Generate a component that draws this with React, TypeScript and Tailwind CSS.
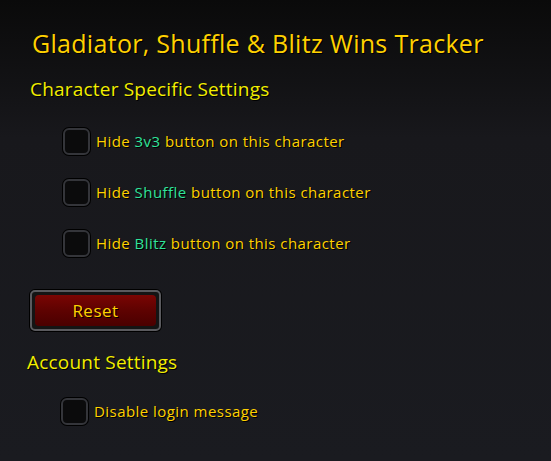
const shadow = "[text-shadow:1px_1px_0_#000]"

interface Option {
  before: string
  highlight?: string
  after: string
}

const characterOptions: Option[] = [
  { before: "Hide ", highlight: "3v3", after: " button on this character" },
  { before: "Hide ", highlight: "Shuffle", after: " button on this character" },
  { before: "Hide ", highlight: "Blitz", after: " button on this character" },
]

function Checkbox({ option }: { option: Option }) {
  return (
    <div className="flex h-[27px] items-center gap-[6px]">
      <div className="h-[27px] w-[27px] shrink-0 rounded-[6px] border-2 border-[#34353a] bg-[#0b0b0c] shadow-[0_0_0_1px_#000]" />
      <span className={`text-[15px] tracking-[0.45px] text-[#ffd100] ${shadow}`}>
        {option.before}
        {option.highlight && <span className="text-[#2fe39a]">{option.highlight}</span>}
        {option.after}
      </span>
    </div>
  )
}

export default function App() {
  return (
    <div
      className="h-[461px] w-[551px] overflow-hidden bg-gradient-to-b from-[#0a0a0a] via-[#18181c] via-30% to-[#1a1b20]"
      style={{ fontFamily: "'Open Sans', 'Noto Sans', sans-serif" }}
    >
      <div className="flex flex-col pt-[26px]">
        <h1 className={`pl-[32px] text-[25px] leading-[34px] tracking-[0.3px] text-[#ffd100] ${shadow}`}>
          Gladiator, Shuffle &amp; Blitz Wins Tracker
        </h1>

        <h2 className={`mt-[17px] pl-[30px] text-[19px] leading-[24px] tracking-[0.2px] text-[#f2ee00] ${shadow}`}>
          Character Specific Settings
        </h2>

        <div className="mt-[27px] flex flex-col gap-[24px] pl-[63px]">
          {characterOptions.map((o) => (
            <Checkbox key={o.highlight} option={o} />
          ))}
        </div>

        <div className="mt-[33px] pl-[30px]">
          <button className="flex h-[41px] w-[131px] items-center justify-center rounded-[5px] border-2 border-[#5a5a5e] bg-[#141414] p-[3px] shadow-[0_0_0_1px_#000]">
            <span
              className={`flex h-full w-full items-center justify-center rounded-[4px] bg-gradient-to-b from-[#7a0503] via-[#5e0201] to-[#4a0000] text-[17px] tracking-[0.5px] text-[#ffd100] ${shadow}`}
            >
              Reset
            </span>
          </button>
        </div>

        <h2 className={`mt-[19px] pl-[27px] text-[19px] leading-[24px] tracking-[0.2px] text-[#f2ee00] ${shadow}`}>
          Account Settings
        </h2>

        <div className="mt-[24px] pl-[61px]">
          <Checkbox option={{ before: "Disable login message", after: "" }} />
        </div>
      </div>
    </div>
  )
}
